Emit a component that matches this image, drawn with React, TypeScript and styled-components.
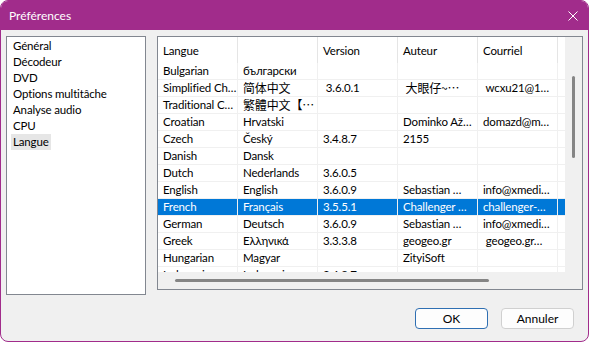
import React from 'react'
import styled, { createGlobalStyle } from 'styled-components'

const FONT = 'Lato, "Noto Sans", "Noto Sans CJK SC", sans-serif'

const GlobalStyle = createGlobalStyle`
  html, body {
    margin: 0;
    padding: 0;
    background: #ffffff;
  }
  body {
    font-family: ${FONT};
    font-size: 11.5px;
    letter-spacing: -0.15px;
    color: #000;
  }
`

const pages = ['Général', 'Décodeur', 'DVD', 'Options multitâche', 'Analyse audio', 'CPU', 'Langue']

const columns = ['Langue', '', 'Version', 'Auteur', 'Courriel', '']

type Row = { cells: string[]; cjk?: boolean[]; selected?: boolean }

const rows: Row[] = [
  { cells: ['Bulgarian', 'български', '', '', ''] },
  { cells: ['Simplified Ch…', '简体中文', ' 3.6.0.1', ' 大眼仔~…', ' wcxu21@1…'], cjk: [false, true, false, true, false] },
  { cells: ['Traditional C…', '繁體中文【…', '', '', ''], cjk: [false, true, false, false, false] },
  { cells: ['Croatian', 'Hrvatski', '', 'Dominko Až…', 'domazd@m…'] },
  { cells: ['Czech', 'Český', '3.4.8.7', '2155', ''] },
  { cells: ['Danish', 'Dansk', '', '', ''] },
  { cells: ['Dutch', 'Nederlands', '3.6.0.5', '', ''] },
  { cells: ['English', 'English', '3.6.0.9', 'Sebastian …', 'info@xmedi…'] },
  { cells: ['French', 'Français', '3.5.5.1', 'Challenger …', 'challenger-…'], selected: true },
  { cells: ['German', 'Deutsch', '3.6.0.9', 'Sebastian …', 'info@xmedi…'] },
  { cells: ['Greek', 'Ελληνικά', '3.3.3.8', 'geogeo.gr', ' geogeo.gr…'] },
  { cells: ['Hungarian', 'Magyar', '', 'ZityiSoft', ''] },
  { cells: ['Indonesian', 'Indonesia', '3.4.8.7', '', ''] },
]

function App() {
  return (
    <>
      <GlobalStyle />
      <Window>
        <TitleBar>
          <Title>Préférences</Title>
          <CloseIcon viewBox="0 0 10 10">
            <path d="M0.5 0.5 L9.5 9.5 M9.5 0.5 L0.5 9.5" />
          </CloseIcon>
        </TitleBar>

        <Body>
          {/* Pages list */}
          <PageList>
            {pages.map((p) => (
              <PageItem key={p} $selected={p === 'Langue'}>{p}</PageItem>
            ))}
          </PageList>

          {/* Languages list view */}
          <ListView>
            <Viewport>
              <HeaderRow>
                {columns.map((c, i) => (
                  <HeaderCell key={i}>{c}</HeaderCell>
                ))}
              </HeaderRow>
              {rows.map((r, i) => (
                <DataRow key={i} $selected={!!r.selected}>
                  {[...r.cells, ''].map((c, j) => (
                    <Cell key={j} $cjk={!!r.cjk?.[j]}>{c}</Cell>
                  ))}
                </DataRow>
              ))}
            </Viewport>
            <VScroll>
              <VThumb />
            </VScroll>
            <HScroll>
              <HThumb />
            </HScroll>
            <Corner />
          </ListView>
        </Body>

        <Footer>
          <Button $primary>OK</Button>
          <Button>Annuler</Button>
        </Footer>
      </Window>
    </>
  )
}

const Window = styled.div`
  width: 589px;
  height: 342px;
  box-sizing: border-box;
  border: 1px solid #a12c8b;
  border-radius: 8px;
  overflow: hidden;
  background: #f0f0f0;
  display: flex;
  flex-direction: column;
`
const TitleBar = styled.div`
  height: 29px;
  flex-shrink: 0;
  background: #a12c8b;
  display: flex;
  align-items: center;
  justify-content: space-between;
  padding: 0 10px 0 8px;
`
const Title = styled.span`
  color: #ffffff;
  font-size: 12px;
  letter-spacing: 0;
`
const CloseIcon = styled.svg`
  width: 10px;
  height: 10px;
  stroke: #ffffff;
  stroke-width: 1;
  fill: none;
`
const Body = styled.div`
  display: flex;
  align-items: flex-start;
  padding: 6px 5px 0 5px;
  gap: 11px;
`
const PageList = styled.div`
  width: 140px;
  height: 259px;
  flex-shrink: 0;
  box-sizing: border-box;
  border: 1px solid #828790;
  background: #ffffff;
  padding: 1px 4px;
  display: flex;
  flex-direction: column;
  align-items: flex-start;
`
const PageItem = styled.div<{ $selected?: boolean }>`
  line-height: 16px;
  height: 16px;
  padding: 0 2px;
  white-space: nowrap;
  background: ${(p) => (p.$selected ? '#e6e6e6' : 'transparent')};
`
const ListView = styled.div`
  width: 426px;
  height: 254px;
  flex-shrink: 0;
  box-sizing: border-box;
  border: 1px solid #828790;
  background: #ffffff;
  display: grid;
  grid-template-columns: minmax(0, 1fr) 17px;
  grid-template-rows: minmax(0, 1fr) 17px;
`
const Viewport = styled.div`
  grid-column: 1;
  grid-row: 1;
  overflow: hidden;
  background: #ffffff;
`
const HeaderRow = styled.div`
  display: grid;
  grid-template-columns: repeat(6, 80px);
  height: 26px;
`
const HeaderCell = styled.div`
  box-sizing: border-box;
  border-right: 1px solid #e5e5e5;
  padding-left: 5px;
  display: flex;
  align-items: center;
  white-space: nowrap;
  overflow: hidden;
`
const DataRow = styled.div<{ $selected?: boolean }>`
  display: grid;
  grid-template-columns: repeat(6, 80px);
  height: 17px;
  background: ${(p) => (p.$selected ? '#0078d7' : 'transparent')};
  color: ${(p) => (p.$selected ? '#ffffff' : '#000000')};
`
const Cell = styled.div<{ $cjk?: boolean }>`
  box-sizing: border-box;
  border-right: 1px solid #f0f0f0;
  border-bottom: 1px solid #f0f0f0;
  padding-left: 5px;
  line-height: 16px;
  white-space: pre;
  overflow: hidden;
  font-family: ${(p) => (p.$cjk ? '"Noto Sans CJK SC", "Noto Sans CJK TC", sans-serif' : FONT)};
  font-size: ${(p) => (p.$cjk ? '12px' : '11.5px')};
`
const VScroll = styled.div`
  grid-column: 2;
  grid-row: 1;
  background: #f0f0f0;
  display: flex;
  flex-direction: column;
  align-items: center;
  padding-top: 39px;
`
const VThumb = styled.div`
  width: 3px;
  height: 82px;
  border-radius: 2px;
  background: #858585;
`
const HScroll = styled.div`
  grid-column: 1;
  grid-row: 2;
  background: #f0f0f0;
  display: flex;
  align-items: center;
  padding-left: 17px;
`
const HThumb = styled.div`
  width: 314px;
  height: 3px;
  border-radius: 2px;
  background: #858585;
`
const Corner = styled.div`
  grid-column: 2;
  grid-row: 2;
  background: #f0f0f0;
`
const Footer = styled.div`
  display: flex;
  justify-content: flex-end;
  gap: 13px;
  margin-top: 13px;
  padding-right: 14px;
`
const Button = styled.button<{ $primary?: boolean }>`
  width: 73px;
  height: 21px;
  box-sizing: border-box;
  border-radius: 4px;
  border: 1px solid ${(p) => (p.$primary ? '#2f6fb2' : '#d0d0d0')};
  background: #fdfdfd;
  font-family: ${FONT};
  font-size: 12px;
  color: #000;
  padding: 0;
`

export default App
